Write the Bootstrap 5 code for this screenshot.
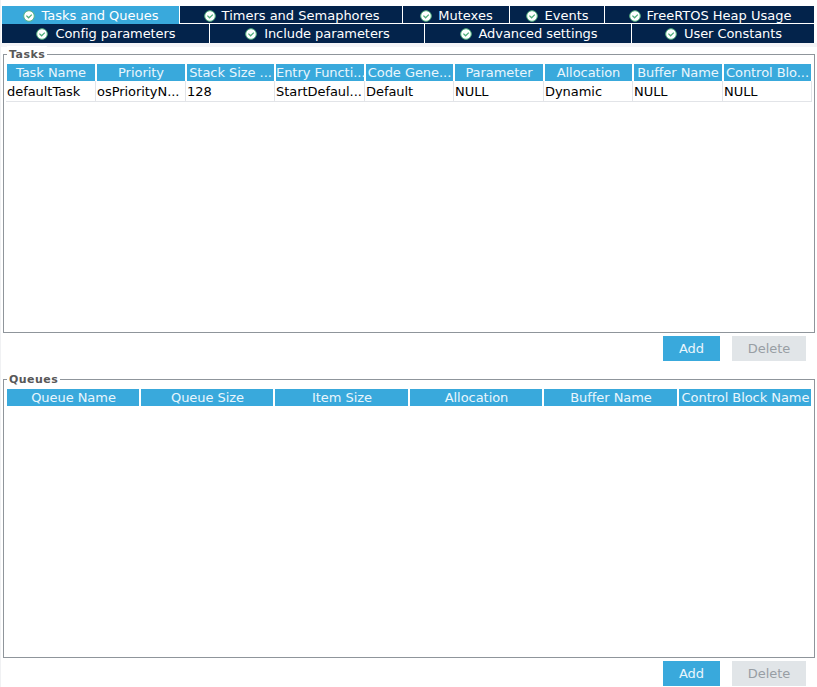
<!DOCTYPE html>
<html lang="en">
<head>
<meta charset="utf-8">
<title>FreeRTOS configuration</title>
<link rel="stylesheet" href="https://cdn.jsdelivr.net/npm/bootstrap@5.3.0/dist/css/bootstrap.min.css">
<style>
body{font:13px/17px "DejaVu Sans",sans-serif;color:#000;background:#fff;height:687px;overflow:hidden;border-left:1px solid #f0f1f3}
.tabs{padding:6px 3px 0 1px;border-bottom:4px solid #f4f4f7}
.tab-line{display:grid;column-gap:1px}
.tab-line.first{grid-template-columns:177px 222px 106px 94px 209px;height:18px}
.tab-line.second{grid-template-columns:207px 214px 206px 182px;height:19px}
.tab-btn{background:#03234b;color:#fff;border:0;padding:0 0 0 1px;height:17px;line-height:17px;gap:6px;white-space:nowrap}
.first .tab-btn{padding-top:2px}
.second .tab-btn{height:19px;line-height:19px}
.second .tab-btn span{margin-left:1px;letter-spacing:-.07px}
.first .tab-btn.current{background:#39a9dc;height:19px;padding-top:0}
.tab-btn svg{width:12px;height:12px;flex:none}
.group{border:1px solid #8f959b;margin:0 2px;height:279px;padding:9px 2px 0 3px;position:relative}
.group-title{position:absolute;left:3px;top:-9px;background:#fff;padding:0 2px;font-size:11px;font-weight:700;letter-spacing:.45px;color:#585858;line-height:17px}
.tasks{margin-top:7px}
.queues{margin-top:18px}
.line{display:grid;column-gap:2px;white-space:nowrap}
.task-cols{grid-template-columns:88px 88px 87px 88px 87px 88px 87px 88px 87px}
.queue-cols{grid-template-columns:132px 132px 133px 132px 133px 132px}
.line .hd{background:#39a9dc;color:#e9f6fc;height:17px;text-align:center;letter-spacing:-.05px}
.queue-cols .hd{padding-left:1px}
.task-values{column-gap:0;grid-template-columns:90px 90px 89px 90px 89px 90px 89px 90px 89px;margin-left:-1px}
.task-values .val{height:21px;line-height:21px;padding-left:1px;letter-spacing:-.05px;border-right:1px solid #e2e4e8;border-bottom:1px solid #e2e4e8}
.actions{gap:12px;padding:3px 11px 0 0}
.act{height:25px;border:0;border-radius:0;padding:0;font-size:13px;line-height:25px;background:#39a9dc;color:#e9f6fc}
.act.add{width:57px}
.act.del,.act.del:disabled{width:74px;background:#e1e5e8;color:#989ea4;opacity:1}
</style>
<script src="https://cdn.jsdelivr.net/npm/bootstrap@5.3.0/dist/js/bootstrap.bundle.min.js"></script>
</head>
<body>
<svg class="d-none"><symbol id="ok" viewBox="0 0 12 12"><circle cx="6" cy="6" r="5.3" fill="#fff" stroke="#55b381" stroke-width="1"/><path d="M3.4 5.6 5.6 7.8 8.8 4.6" fill="none" stroke="#4fae7a" stroke-width="1.3"/></symbol></svg>
<nav class="tabs">
<div class="tab-line first">
<button class="tab-btn current d-flex align-items-center justify-content-center"><svg><use href="#ok"/></svg><span>Tasks and Queues</span></button>
<button class="tab-btn d-flex align-items-center justify-content-center"><svg><use href="#ok"/></svg><span>Timers and Semaphores</span></button>
<button class="tab-btn d-flex align-items-center justify-content-center"><svg><use href="#ok"/></svg><span>Mutexes</span></button>
<button class="tab-btn d-flex align-items-center justify-content-center"><svg><use href="#ok"/></svg><span>Events</span></button>
<button class="tab-btn d-flex align-items-center justify-content-center"><svg><use href="#ok"/></svg><span>FreeRTOS Heap Usage</span></button>
</div>
<div class="tab-line second">
<button class="tab-btn d-flex align-items-center justify-content-center"><svg><use href="#ok"/></svg><span>Config parameters</span></button>
<button class="tab-btn d-flex align-items-center justify-content-center"><svg><use href="#ok"/></svg><span>Include parameters</span></button>
<button class="tab-btn d-flex align-items-center justify-content-center"><svg><use href="#ok"/></svg><span>Advanced settings</span></button>
<button class="tab-btn d-flex align-items-center justify-content-center"><svg><use href="#ok"/></svg><span>User Constants</span></button>
</div>
</nav>
<section class="group tasks">
<div class="group-title">Tasks</div>
<div class="line task-cols"><div class="hd">Task Name</div><div class="hd">Priority</div><div class="hd">Stack Size ...</div><div class="hd">Entry Functi...</div><div class="hd">Code Gene...</div><div class="hd">Parameter</div><div class="hd">Allocation</div><div class="hd">Buffer Name</div><div class="hd">Control Blo...</div></div>
<div class="line task-values"><div class="val">defaultTask</div><div class="val">osPriorityN...</div><div class="val">128</div><div class="val">StartDefaul...</div><div class="val">Default</div><div class="val">NULL</div><div class="val">Dynamic</div><div class="val">NULL</div><div class="val">NULL</div></div>
</section>
<div class="actions d-flex justify-content-end"><button class="btn act add">Add</button><button class="btn act del" disabled>Delete</button></div>
<section class="group queues">
<div class="group-title">Queues</div>
<div class="line queue-cols"><div class="hd">Queue Name</div><div class="hd">Queue Size</div><div class="hd">Item Size</div><div class="hd">Allocation</div><div class="hd">Buffer Name</div><div class="hd">Control Block Name</div></div>
</section>
<div class="actions d-flex justify-content-end"><button class="btn act add">Add</button><button class="btn act del" disabled>Delete</button></div>
</body>
</html>
